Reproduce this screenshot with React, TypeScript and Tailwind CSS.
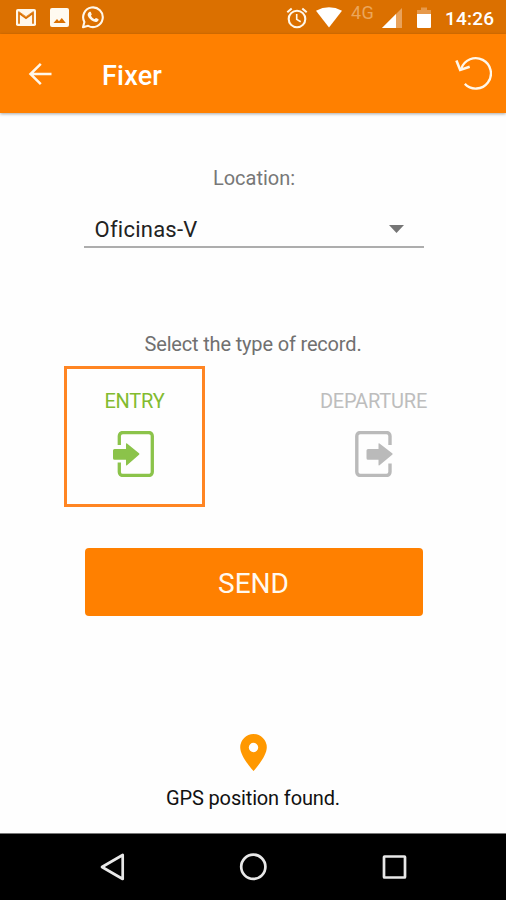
import type { ReactNode } from 'react';

function StatusBar() {
  return (
    <div className="flex h-[34px] items-start bg-[#db7000] text-white">
      <svg className="ml-[16px] mt-[9px] h-[17px] w-[20px]" viewBox="0 0 20 17">
        <rect width="20" height="17" rx="1.8" fill="#fff7ea" />
        <path d="M3 14.8V4L10 9.2 17 4V14.8" fill="none" stroke="#db7000" strokeWidth="1.7" />
        <path d="M2.7 2.5 10 7.7 17.3 2.5" fill="none" stroke="#db7000" strokeWidth="0.7" />
      </svg>
      <svg className="ml-[14px] mt-[8px] h-[19px] w-[19px]" viewBox="0 0 19 19">
        <rect width="19" height="19" rx="2" fill="#fffaf0" />
        <path d="M3.500 15 7 11l2 2.300 2.800-3.200 4 4.900z" fill="#db7000" />
      </svg>
      <svg className="ml-[12px] mt-[6px] h-[23px] w-[24px]" viewBox="0 0 24 23">
        <path d="M2 21.2 3.4 16A9.8 9.8 0 1 1 7.2 19.8z" fill="none" stroke="#fff7ea" strokeWidth="2.1" strokeLinejoin="round" />
        <path d="M8.6 5.8c.5-.3 1-.2 1.2.3l.9 2.1c.2.5-.8 1.2-.7 1.6.7 1.5 1.9 2.6 3.4 3.3.5.2 1.2-1.4 1.7-1.2l2.1 1c.6.3.4 1.2 0 1.8-1 1.4-2.7 1.5-4.4.8-2.900-1.100-5.100-3.400-6-5.700-.5-1.600.4-3.400 1.800-4z" fill="#fff7ea" />
      </svg>
      <svg className="ml-[181px] mt-[7px] h-[22px] w-[22px]" viewBox="0 0 22 22">
        <g fill="none" stroke="#fff7ea" strokeWidth="2.1">
          <circle cx="11" cy="12" r="8.3" />
          <path d="M1.3 5.2 5.7 1.5M16.3 1.5l4.4 3.7" />
          <path d="M10.7 7v5.4l4 2.4" strokeWidth="1.6" />
        </g>
      </svg>
      <svg className="ml-[8px] mt-[7px] h-[21px] w-[26px]" viewBox="0 0 26 21">
        <path d="M0 3.7Q13-3.2 26 3.7L13 20.5z" fill="#fff" />
      </svg>
      <span className="ml-[9px] mt-[3px] w-[24px] whitespace-nowrap text-[18px] leading-[20px] tracking-[0.3px] text-[#eba65b]">4G</span>
      <svg className="ml-[7px] mt-[8px] h-[20px] w-[20px]" viewBox="0 0 20 20">
        <path d="M20 0v20H0z" fill="#e9a25a" />
        <path d="M14 6v14H0z" fill="#fff" />
      </svg>
      <svg className="ml-[15px] mt-[7px] h-[21px] w-[14px]" viewBox="0 0 14 21">
        <path d="M0 3h4V.5h6V3h4v5H0z" fill="#e6994b" />
        <path d="M0 7h14v13a1 1 0 0 1-1 1H1a1 1 0 0 1-1-1z" fill="#fff" />
      </svg>
      <span className="ml-[14px] mt-[8px] whitespace-nowrap text-[19px] font-medium leading-[22px] tracking-[0.2px]">14:26</span>
    </div>
  );
}

function AppBar() {
  return (
    <header className="flex h-[79px] items-center bg-[#ff8000] text-white shadow-[0_1px_3px_rgba(0,0,0,0.35)]">
      <svg className="ml-[28px] h-[24px] w-[24px]" viewBox="0 0 24 24">
        <path d="M23.5 12H2.5M12.8 1.9 2.5 12l10.3 10.1" fill="none" stroke="#fff7ea" strokeWidth="2.5" />
      </svg>
      <h1 className="ml-[50px] mt-[4px] text-[27px] font-medium leading-[32px] tracking-[0.2px]">Fixer</h1>
      <svg className="ml-auto mr-[14px] h-[36px] w-[38px]" viewBox="0 0 38 36">
        <path d="M7.300 12.600A15.200 15.200 0 1 1 10.800 27.900" fill="none" stroke="#fff7ea" strokeWidth="2.3" />
        <path d="M2.400 4.600 6.200 13.900 15.700 10.800" fill="none" stroke="#fff7ea" strokeWidth="2.6" />
      </svg>
    </header>
  );
}

function RecordOption({ label, className, children }: { label: string; className: string; children: ReactNode }) {
  return (
    <button type="button" className={`flex h-[141px] w-[141px] flex-col items-center border-[3px] ${className}`}>
      <span className="mt-[20px] whitespace-nowrap text-[20px] leading-[24px] tracking-[-0.2px]">{label}</span>
      {children}
    </button>
  );
}

function NavigationBar() {
  return (
    <nav className="flex h-[67px] items-center border-t border-[#777] bg-black">
      <svg className="ml-[100px] h-[28px] w-[25px]" viewBox="0 0 25 28">
        <path d="M22.7 2v24L2 14z" fill="none" stroke="#e8e8e8" strokeWidth="2.7" strokeLinejoin="round" />
      </svg>
      <svg className="ml-[114px] h-[28px] w-[28px]" viewBox="0 0 28 28">
        <circle cx="14.3" cy="13.800" r="12.1" fill="none" stroke="#e8e8e8" strokeWidth="2.7" />
      </svg>
      <svg className="ml-[115px] h-[25px] w-[25px]" viewBox="0 0 25 25">
        <rect x="2" y="1.500" width="21" height="21" rx="0.5" fill="none" stroke="#e8e8e8" strokeWidth="2.7" />
      </svg>
    </nav>
  );
}

export default function App() {
  return (
    <div className="flex h-[900px] w-[506px] flex-col overflow-hidden bg-[#fefefe] font-['Roboto','Liberation_Sans',sans-serif]">
      <StatusBar />
      <AppBar />
      <main className="flex flex-1 flex-col items-center">
        <label className="ml-[2px] mt-[53px] text-[20px] leading-[24px] text-[#777]">Location:</label>
        <div className="ml-px mt-[18px] flex h-[40px] w-[340px] items-center justify-between border-b-2 border-[#adadad] pl-[11px] pr-[20px] text-[22px] text-[#222]">
          <span className="mt-[4px] tracking-[0.25px]">Oficinas-V</span>
          <svg className="mt-[4px] h-[8px] w-[15px]" viewBox="0 0 15 8">
            <path d="M0 0h15L7.5 8z" fill="#757575" />
          </svg>
        </div>
        <p className="mt-[84px] text-[20px] leading-[24px] tracking-[-0.17px] text-[#707070]">Select the type of record.</p>
        <div className="ml-[2px] mt-[10px] flex w-[380px] justify-between">
          <RecordOption label="ENTRY" className="border-[#ff8523] text-[#82bb30]">
            <svg className="mr-[3px] mt-[18px] h-[46px] w-[42px]" viewBox="0 0 42 46">
              <path d="M7.3 14V5a3.5 3.5 0 0 1 3.5-3.5h26A3.5 3.5 0 0 1 40.3 5v36a3.5 3.5 0 0 1-3.5 3.5h-26A3.5 3.5 0 0 1 7.3 41V31.500" fill="none" stroke="#8bc34a" strokeWidth="3.3" />
              <path d="M2.5 18h11.5v-5q0-1.2 1-.4l12 9.600q1 .8 0 1.600l-12 10.400q-1 .8-1-.4v-5H2.500q-1.500 0-1.500-1.500v-7.800Q1 18 2.500 18z" fill="#8bc34a" />
            </svg>
          </RecordOption>
          <RecordOption label="DEPARTURE" className="border-transparent text-[#bdbdbd]">
            <svg className="ml-[3px] mt-[18px] h-[46px] w-[40px]" viewBox="0 0 40 46">
              <path d="M35 14V5a3.5 3.5 0 0 0-3.5-3.5H5.3A3.5 3.5 0 0 0 1.8 5v36a3.5 3.5 0 0 0 3.5 3.5h26.2A3.5 3.5 0 0 0 35 41v-8.5" fill="none" stroke="#bababa" strokeWidth="3.4" />
              <path d="M13 18h10.5v-5q0-1.200 1-.4l12.700 9.600q1 .8 0 1.600L24.500 34.200q-1 .8-1-.4v-5H13q-1.500 0-1.500-1.500v-7.800Q11.500 18 13 18z" fill="#bababa" />
            </svg>
          </RecordOption>
        </div>
        <button type="button" className="ml-px mt-[41px] h-[68px] w-[338px] rounded-[4px] bg-[#ff8000] pt-[4px] text-[28px] text-[#fff9f0]">SEND</button>
        <svg className="mt-[118px] h-[37px] w-[27px]" viewBox="0 0 27 37">
          <path fillRule="evenodd" d="M13.500 0A13.300 13.300 0 0 0 .2 13.300C.2 23 13.500 37 13.500 37S26.800 23 26.800 13.300A13.300 13.300 0 0 0 13.500 0zm0 8.800a4.700 4.700 0 1 1 0 9.400 4.700 4.700 0 0 1 0-9.400z" fill="#ff9800" />
        </svg>
        <p className="mt-[15px] text-[20px] leading-[24px] tracking-[-0.15px] text-[#111]">GPS position found.</p>
      </main>
      <NavigationBar />
    </div>
  );
}
